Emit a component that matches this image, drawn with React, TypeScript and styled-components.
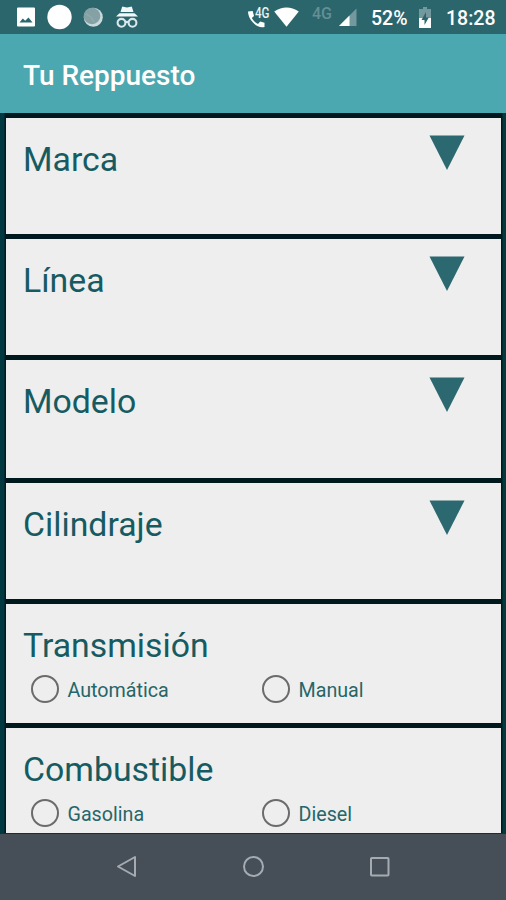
import React from "react";
import styled, { createGlobalStyle } from "styled-components";

const GlobalStyle = createGlobalStyle`
  * { box-sizing: border-box; }
  body { margin: 0; background: #02272d; font-family: Roboto, "Noto Sans", sans-serif; }
`;

const Screen = styled.div`
  width: 506px;
  height: 900px;
  display: flex;
  flex-direction: column;
  overflow: hidden;
  background: #02272d;
`;

const StatusBar = styled.header`
  height: 34px;
  flex: none;
  display: flex;
  align-items: center;
  justify-content: space-between;
  background: #2c666d;
  color: #fff;
`;

const StatusGroup = styled.div`
  display: flex;
  align-items: center;
  height: 34px;
`;

const StatusIcon = styled.svg<{ $gap?: number }>`
  display: block;
  flex: none;
  margin-left: ${(p) => p.$gap ?? 0}px;
`;

const StatusText = styled.span<{ $gap: number; $width: number }>`
  margin-left: ${(p) => p.$gap}px;
  width: ${(p) => p.$width}px;
  padding-top: 4px;
  font-size: 19.5px;
  line-height: 32px;
  font-weight: 500;
  white-space: nowrap;
`;

const CallIcon = styled.span`
  position: relative;
  display: block;
  width: 24px;
  height: 26px;
`;

const CallBadge = styled.span`
  position: absolute;
  left: 7px;
  top: 2px;
  font-size: 14.5px;
  line-height: 16px;
  font-weight: 500;
  transform: scaleX(0.8);
  transform-origin: left center;
  color: #e9f2f3;
`;

const NetworkLabel = styled.span`
  width: 20px;
  margin: 0 0 7px 13px;
  font-size: 16px;
  line-height: 20px;
  font-weight: 500;
  color: #648f95;
`;

const AppBar = styled.div`
  height: 79px;
  flex: none;
  display: flex;
  align-items: center;
  padding: 4px 23px 0;
  background: #4ba8b0;
`;

const Title = styled.h1`
  margin: 0;
  font-size: 28px;
  line-height: 36px;
  font-weight: 500;
  color: #fff;
`;

const Content = styled.main`
  flex: 1;
  min-height: 0;
  overflow: hidden;
  padding: 5px 5px 0 6px;
  background: linear-gradient(90deg, #023840 0, #023840 4px, #00191e 5px, #00191e 502px, #023b3e 503px);
`;

const Card = styled.section<{ $height: number }>`
  height: ${(p) => p.$height}px;
  margin-bottom: 5px;
  padding: 20px 36.5px 0 17px;
  background: #eee;
  box-shadow: 0 0 0 1px #00191e;
`;

const CardHead = styled.div`
  display: flex;
  justify-content: space-between;
  align-items: flex-start;
`;

const Label = styled.h2`
  margin: 0;
  font-size: 33.8px;
  line-height: 44px;
  font-weight: 400;
  color: #165b61;
`;

const Arrow = styled.svg`
  display: block;
  margin-top: -3px;
`;

const Options = styled.div`
  display: grid;
  grid-template-columns: 231px 1fr;
  padding: 6px 0 0 8px;
`;

const Option = styled.label`
  display: flex;
  align-items: center;
  gap: 8.5px;
  height: 30px;
  font-size: 19.7px;
  color: #25666a;
`;

const Radio = styled.span`
  width: 28px;
  height: 28px;
  border: 2.5px solid #6b6b6b;
  border-radius: 50%;
`;

const OptionText = styled.span`
  padding-top: 3px;
`;

const NavBar = styled.nav`
  height: 67px;
  flex: none;
  display: flex;
  justify-content: center;
  gap: 102px;
  padding-top: 20px;
  background: #464e57;
  border-top: 1px solid #1e2c38;
`;

const selects = [
  { name: "Marca", height: 116 },
  { name: "Línea", height: 116 },
  { name: "Modelo", height: 118 },
  { name: "Cilindraje", height: 116 },
];

const radios = [
  { name: "Transmisión", height: 119, options: ["Automática", "Manual"] },
  { name: "Combustible", height: 119, options: ["Gasolina", "Diesel"] },
];

export default function App() {
  return (
    <Screen>
      <GlobalStyle />
      <StatusBar>
        <StatusGroup>
          <StatusIcon $gap={16} width="20" height="20" viewBox="0 0 20 20">
            <path fill="#fff" fillRule="evenodd" d="M2 .5h16a1 1 0 0 1 1 1v17a1 1 0 0 1-1 1H2a1 1 0 0 1-1-1V1.500a1 1 0 0 1 1-1zM3.500 15.500h13l-4-5-3.300 3.200-2.400-2.200z" />
          </StatusIcon>
          <StatusIcon $gap={11} width="26" height="26" viewBox="0 0 26 26">
            <circle cx="12.5" cy="13" r="12.2" fill="#fff" />
          </StatusIcon>
          <StatusIcon $gap={10} width="20" height="20" viewBox="0 0 20 20">
            <circle cx="10.300" cy="10.300" r="9.500" fill="#cbd9db" />
            <circle cx="9" cy="9" r="8.300" fill="#84a1a5" />
            <path d="M3 7l5 3 3 5" stroke="#8fa9ad" strokeWidth="1.6" fill="none" />
          </StatusIcon>
          <StatusIcon $gap={13} width="22" height="22" viewBox="0 0 22 22">
            <path fill="#f2f7f8" d="M6 1.200Q6.200.4 7.200.7L11 1.600 14.800.7Q15.800.4 16 1.200L17.500 6H4.500zM3.500 7.200h15L22 10.500H0z" />
            <g fill="none" stroke="#d9e8ea" strokeWidth="2.100">
              <circle cx="5.500" cy="16.800" r="3.900" />
              <circle cx="16.500" cy="16.800" r="3.900" />
              <path d="M9.200 16.500Q11 15.300 12.800 16.500" />
            </g>
          </StatusIcon>
        </StatusGroup>
        <StatusGroup>
          <CallIcon>
            <StatusIcon width="24" height="26" viewBox="0 0 24 26">
              <path fill="#fff" d="M0 7.500L4.700 7 6 12 3.800 14Q6 18 10 20L12.200 17.600 16.500 18.800V23Q10.500 24.500 5 18.500 0 13.500 0 7.500z" />
            </StatusIcon>
            <CallBadge>4G</CallBadge>
          </CallIcon>
          <StatusIcon $gap={2} width="25" height="20" viewBox="0 0 25 20">
            <path fill="#fff" d="M.2 4.500Q12.500-3.700 24.800 4.500L12.500 19.800z" />
          </StatusIcon>
          <NetworkLabel>4G</NetworkLabel>
          <StatusIcon $gap={7} width="18" height="18" viewBox="0 0 18 18">
            <path fill="#73989d" d="M17.500.5V18H0z" />
            <path fill="#fff" d="M10.500 7.500V18H0z" />
          </StatusIcon>
          <StatusText $gap={14} $width={37}>52%</StatusText>
          <StatusIcon $gap={11} width="12" height="21" viewBox="0 0 12 21">
            <path fill="#73989d" d="M4 0h4v2h4v10H0V2h4z" />
            <path fill="#fff" d="M0 11h12v10H0z" />
            <path fill="#2c666d" d="M7 5L2.500 13H5.500V18L9.800 10.500H7z" />
          </StatusIcon>
          <StatusText $gap={15} $width={60}>18:28</StatusText>
        </StatusGroup>
      </StatusBar>
      <AppBar>
        <Title>Tu Reppuesto</Title>
      </AppBar>
      <Content>
        {selects.map((s) => (
          <Card key={s.name} $height={s.height}>
            <CardHead>
              <Label>{s.name}</Label>
              <Arrow width="36" height="36" viewBox="0 0 36 36">
                <path d="M.5.500H35.500L18 35z" fill="#2c686f" />
              </Arrow>
            </CardHead>
          </Card>
        ))}
        {radios.map((r) => (
          <Card key={r.name} $height={r.height}>
            <Label>{r.name}</Label>
            <Options>
              {r.options.map((o) => (
                <Option key={o}>
                  <Radio />
                  <OptionText>{o}</OptionText>
                </Option>
              ))}
            </Options>
          </Card>
        ))}
      </Content>
      <NavBar>
        <svg width="24" height="24" viewBox="0 0 24 24" fill="none" stroke="#a5abb0" strokeWidth="2" strokeLinejoin="round">
          <path d="M20 3V22L3 12.500z" />
        </svg>
        <svg width="24" height="24" viewBox="0 0 24 24" fill="none" stroke="#a5abb0" strokeWidth="2">
          <circle cx="12.500" cy="12.500" r="9.500" />
        </svg>
        <svg width="24" height="24" viewBox="0 0 24 24" fill="none" stroke="#a5abb0" strokeWidth="2">
          <rect x="4" y="4" width="17.500" height="17.500" rx=".8" />
        </svg>
      </NavBar>
    </Screen>
  );
}
